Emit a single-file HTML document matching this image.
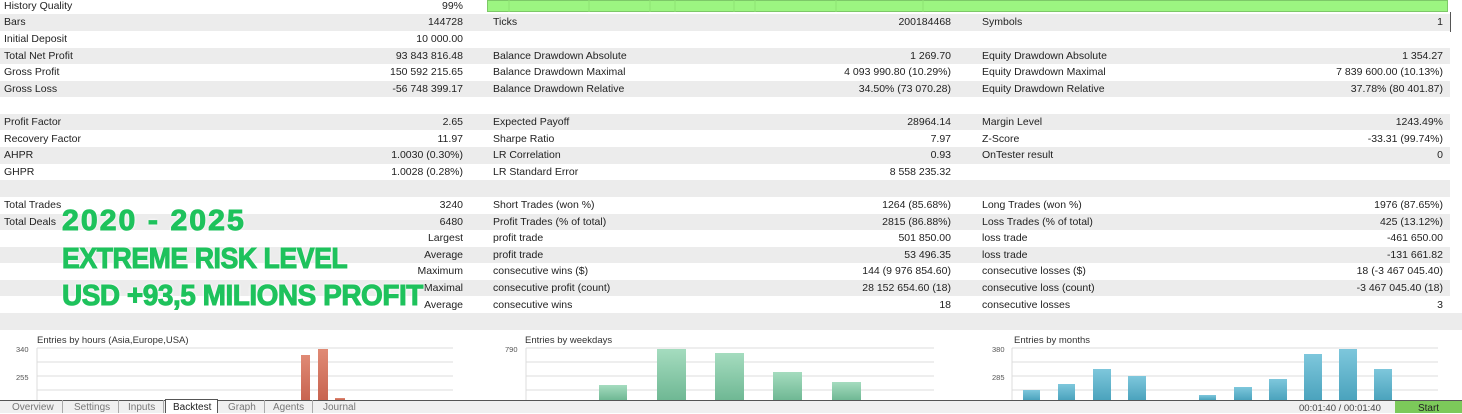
<!DOCTYPE html>
<html><head><style>
*{margin:0;padding:0;box-sizing:border-box}
body{width:1462px;height:413px;overflow:hidden;background:#fff;font-family:"Liberation Sans",sans-serif;font-size:10.5px;color:#222;position:relative}
.row{position:absolute;left:0;width:1450px;height:16.6px}
.g{background:#ececec}
.t{position:absolute;top:2px;white-space:nowrap}
.ov{position:absolute;left:62px;font-family:"Liberation Sans",sans-serif;font-weight:bold;font-size:29px;color:#1ec25c;-webkit-text-stroke:1px #1ec25c;text-shadow:0 0 3px #fff,0 0 3px #fff;white-space:nowrap;transform-origin:0 0}
.tab{position:absolute;top:400px;height:13px;font-size:10px;color:#777;border-right:1px solid #aaa;padding:2px 8px 0 10px}
</style></head><body>
<div style="position:absolute;left:487px;top:0;width:961px;height:12px;background:#9cf581;border:1px solid #7dc868"></div>
<svg style="position:absolute;left:487px;top:0" width="961" height="12"><g stroke="#8ee474"><line x1="22" y1="0" x2="22" y2="12"/><line x1="102" y1="0" x2="102" y2="12"/><line x1="163" y1="0" x2="163" y2="12"/><line x1="188" y1="0" x2="188" y2="12"/><line x1="247" y1="0" x2="247" y2="12"/><line x1="268" y1="0" x2="268" y2="12"/><line x1="349" y1="0" x2="349" y2="12"/><line x1="436" y1="0" x2="436" y2="12"/></g></svg>
<div style="position:absolute;left:1450px;top:12px;width:1px;height:20px;background:#555"></div>

<div id="rows"></div>
<script>
var R=[
["History Quality","99%","","","","",0],
["Bars","144728","Ticks","200184468","Symbols","1",1],
["Initial Deposit","10 000.00","","","","",0],
["Total Net Profit","93 843 816.48","Balance Drawdown Absolute","1 269.70","Equity Drawdown Absolute","1 354.27",1],
["Gross Profit","150 592 215.65","Balance Drawdown Maximal","4 093 990.80 (10.29%)","Equity Drawdown Maximal","7 839 600.00 (10.13%)",0],
["Gross Loss","-56 748 399.17","Balance Drawdown Relative","34.50% (73 070.28)","Equity Drawdown Relative","37.78% (80 401.87)",1],
["","","","","","",0],
["Profit Factor","2.65","Expected Payoff","28964.14","Margin Level","1243.49%",1],
["Recovery Factor","11.97","Sharpe Ratio","7.97","Z-Score","-33.31 (99.74%)",0],
["AHPR","1.0030 (0.30%)","LR Correlation","0.93","OnTester result","0",1],
["GHPR","1.0028 (0.28%)","LR Standard Error","8 558 235.32","","",0],
["","","","","","",1],
["Total Trades","3240","Short Trades (won %)","1264 (85.68%)","Long Trades (won %)","1976 (87.65%)",0],
["Total Deals","6480","Profit Trades (% of total)","2815 (86.88%)","Loss Trades (% of total)","425 (13.12%)",1],
["","Largest","profit trade","501 850.00","loss trade","-461 650.00",0],
["","Average","profit trade","53 496.35","loss trade","-131 661.82",1],
["","Maximum","consecutive wins ($)","144 (9 976 854.60)","consecutive losses ($)","18 (-3 467 045.40)",0],
["","Maximal","consecutive profit (count)","28 152 654.60 (18)","consecutive loss (count)","-3 467 045.40 (18)",1],
["","Average","consecutive wins","18","consecutive losses","3",0]
];
var h="";
R.forEach(function(r,i){
var top=(-2.3+16.6*i).toFixed(1);
h+='<div class="row'+(r[6]?' g':'')+'" style="top:'+top+'px">'+
'<span class="t" style="left:4px">'+r[0]+'</span>'+
'<span class="t" style="right:'+(1450-463)+'px">'+r[1]+'</span>'+
'<span class="t" style="left:493px">'+r[2]+'</span>'+
'<span class="t" style="right:'+(1450-951)+'px">'+r[3]+'</span>'+
'<span class="t" style="left:982px">'+r[4]+'</span>'+
'<span class="t" style="right:'+(1450-1443)+'px">'+r[5]+'</span></div>';
});
document.getElementById('rows').innerHTML=h;
</script>
<div style="position:absolute;left:0;top:313px;width:1462px;height:17px;background:#ececec"></div>

<svg style="position:absolute;left:0;top:330px" width="1462" height="70" font-family="Liberation Sans" >
<defs>
<linearGradient id="gr" x1="0" y1="0" x2="0" y2="1"><stop offset="0" stop-color="#a5dcbf"/><stop offset="1" stop-color="#6fb894"/></linearGradient>
<linearGradient id="bl" x1="0" y1="0" x2="0" y2="1"><stop offset="0" stop-color="#7ec7dc"/><stop offset="1" stop-color="#4ba3bd"/></linearGradient>
<linearGradient id="rd" x1="0" y1="0" x2="0" y2="1"><stop offset="0" stop-color="#e08a75"/><stop offset="1" stop-color="#c86450"/></linearGradient>
</defs>
<g stroke="#dcdcdc">
<line x1="37" y1="18" x2="453" y2="18"/><line x1="37" y1="32" x2="453" y2="32"/><line x1="37" y1="46" x2="453" y2="46"/><line x1="37" y1="60" x2="453" y2="60"/><line x1="37" y1="18" x2="37" y2="70"/>
<line x1="526" y1="18" x2="934" y2="18"/><line x1="526" y1="32" x2="934" y2="32"/><line x1="526" y1="46" x2="934" y2="46"/><line x1="526" y1="60" x2="934" y2="60"/><line x1="526" y1="18" x2="526" y2="70"/>
<line x1="1012" y1="18" x2="1438" y2="18"/><line x1="1012" y1="32" x2="1438" y2="32"/><line x1="1012" y1="46" x2="1438" y2="46"/><line x1="1012" y1="60" x2="1438" y2="60"/><line x1="1012" y1="18" x2="1012" y2="70"/>
</g>
<g font-size="9.5" fill="#333"><text x="37" y="13">Entries by hours (Asia,Europe,USA)</text><text x="525" y="13">Entries by weekdays</text><text x="1014" y="13">Entries by months</text></g>
<g font-size="7.5" fill="#555"><text x="16" y="22">340</text><text x="16" y="50">255</text><text x="505" y="22">790</text><text x="992" y="22">380</text><text x="992" y="50">285</text></g>
<g fill="url(#rd)"><rect x="301" y="25" width="9" height="45"/><rect x="318" y="19" width="10" height="51"/><rect x="335" y="68" width="10" height="2"/></g>
<g fill="url(#gr)"><rect x="599" y="55" width="28" height="15"/><rect x="657" y="19" width="29" height="51"/><rect x="715" y="23" width="29" height="47"/><rect x="773" y="42" width="29" height="28"/><rect x="832" y="52" width="29" height="18"/></g>
<g fill="url(#bl)"><rect x="1023" y="60" width="17" height="10"/><rect x="1058" y="54" width="17" height="16"/><rect x="1093" y="39" width="18" height="31"/><rect x="1128" y="46" width="18" height="24"/><rect x="1199" y="65" width="17" height="5"/><rect x="1234" y="57" width="18" height="13"/><rect x="1269" y="49" width="18" height="21"/><rect x="1304" y="24" width="18" height="46"/><rect x="1339" y="19" width="18" height="51"/><rect x="1374" y="39" width="18" height="31"/></g>
</svg>

<div style="position:absolute;left:0;top:400px;width:1462px;height:13px;background:#f0f0f0;border-top:1px solid #555"></div>
<div class="tab" style="left:2px">Overview</div>
<div class="tab" style="left:64px">Settings</div>
<div class="tab" style="left:118px">Inputs</div>
<div style="position:absolute;left:165px;top:399px;width:53px;height:14px;background:#fff;border:1px solid #555;border-bottom:none;font-size:10px;color:#222;padding:2px 0 0 7px">Backtest</div>
<div class="tab" style="left:218px">Graph</div>
<div class="tab" style="left:263px">Agents</div>
<div class="tab" style="left:313px;border:none">Journal</div>
<div style="position:absolute;left:1299px;top:403px;font-size:9.5px;color:#444">00:01:40 / 00:01:40</div>
<div style="position:absolute;left:1395px;top:401px;width:67px;height:12px;background:#7cc95a;font-size:10px;color:#222;text-align:center;padding-top:2px">Start</div>

<div class="ov" style="top:205px;letter-spacing:2px;transform:scaleX(1.04)">2020 - 2025</div>
<div class="ov" style="top:243px;letter-spacing:-0.5px;transform:scaleX(0.92)">EXTREME RISK LEVEL</div>
<div class="ov" style="top:280px;letter-spacing:-0.5px;transform:scaleX(0.965)">USD +93,5 MILIONS PROFIT</div>
</body></html>
